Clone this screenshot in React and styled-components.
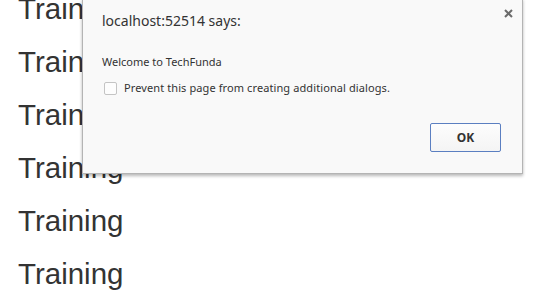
import React from "react";
import styled, { createGlobalStyle } from "styled-components";

const Global = createGlobalStyle`
  html, body { margin: 0; padding: 0; background: #fff; }
  body { width: 552px; height: 303px; overflow: hidden; position: relative; }
`;

const Page = styled.div`
  position: relative;
  width: 552px;
  height: 303px;
  overflow: hidden;
`;

const List = styled.div`
  display: flex;
  flex-direction: column;
  margin-top: -18px;
  padding-left: 18px;
`;

const Line = styled.div`
  font-family: "Liberation Sans", Arial, sans-serif;
  font-size: 29.5px;
  line-height: 53px;
  color: #333;
`;

const Dialog = styled.div`
  position: absolute;
  left: 82px;
  top: -2px;
  width: 441px;
  height: 176px;
  box-sizing: border-box;
  background: #f9f9f9;
  border: 1px solid #b4b4b4;
  box-shadow: 0 2px 3px rgba(0, 0, 0, 0.28);
  font-family: "Noto Sans", "Open Sans", sans-serif;
  color: #333;
  display: flex;
  flex-direction: column;
  padding: 0 21px 0 19px;
`;

const Title = styled.div`
  font-size: 14px;
  line-height: 20px;
  margin-top: 12px;
`;

const Close = styled.button`
  position: absolute;
  right: 9px;
  top: 9px;
  width: 10px;
  height: 10px;
  padding: 0;
  border: 0;
  background: none;
  display: flex;
  align-items: center;
  justify-content: center;
`;

const Message = styled.div`
  font-size: 11px;
  line-height: 16px;
  margin-top: 23px;
`;

const CheckRow = styled.label`
  display: flex;
  align-items: center;
  gap: 7px;
  font-size: 11px;
  line-height: 16px;
  letter-spacing: 0.1px;
  margin-top: 10px;
  margin-left: 2px;
`;

const Box = styled.span`
  width: 11px;
  height: 11px;
  border: 1px solid #c4c4c4;
  border-radius: 2px;
  background: #fdfdfd;
`;

const Footer = styled.div`
  display: flex;
  justify-content: flex-end;
  margin-top: 27px;
`;

const OkButton = styled.button`
  width: 71px;
  height: 29px;
  box-sizing: border-box;
  border: 1px solid #5b7fc1;
  border-radius: 2px;
  background: linear-gradient(#fdfdfd, #f4f4f4);
  font-family: "Noto Sans", "Open Sans", sans-serif;
  font-weight: 700;
  font-size: 12px;
  color: #333;
  padding: 0;
`;

export default function App() {
  return (
    <Page>
      <Global />
      <List>
        {Array.from({ length: 6 }).map((_, i) => (
          <Line key={i}>Training</Line>
        ))}
      </List>
      <Dialog>
        <Close aria-label="close">
          <svg width="9" height="9" viewBox="0 0 9 9">
            <path d="M1 1 L8 8 M8 1 L1 8" stroke="#6b6b6b" strokeWidth="2" />
          </svg>
        </Close>
        <Title>localhost:52514 says:</Title>
        <Message>Welcome to TechFunda</Message>
        <CheckRow>
          <Box />
          Prevent this page from creating additional dialogs.
        </CheckRow>
        <Footer>
          <OkButton>OK</OkButton>
        </Footer>
      </Dialog>
    </Page>
  );
}
